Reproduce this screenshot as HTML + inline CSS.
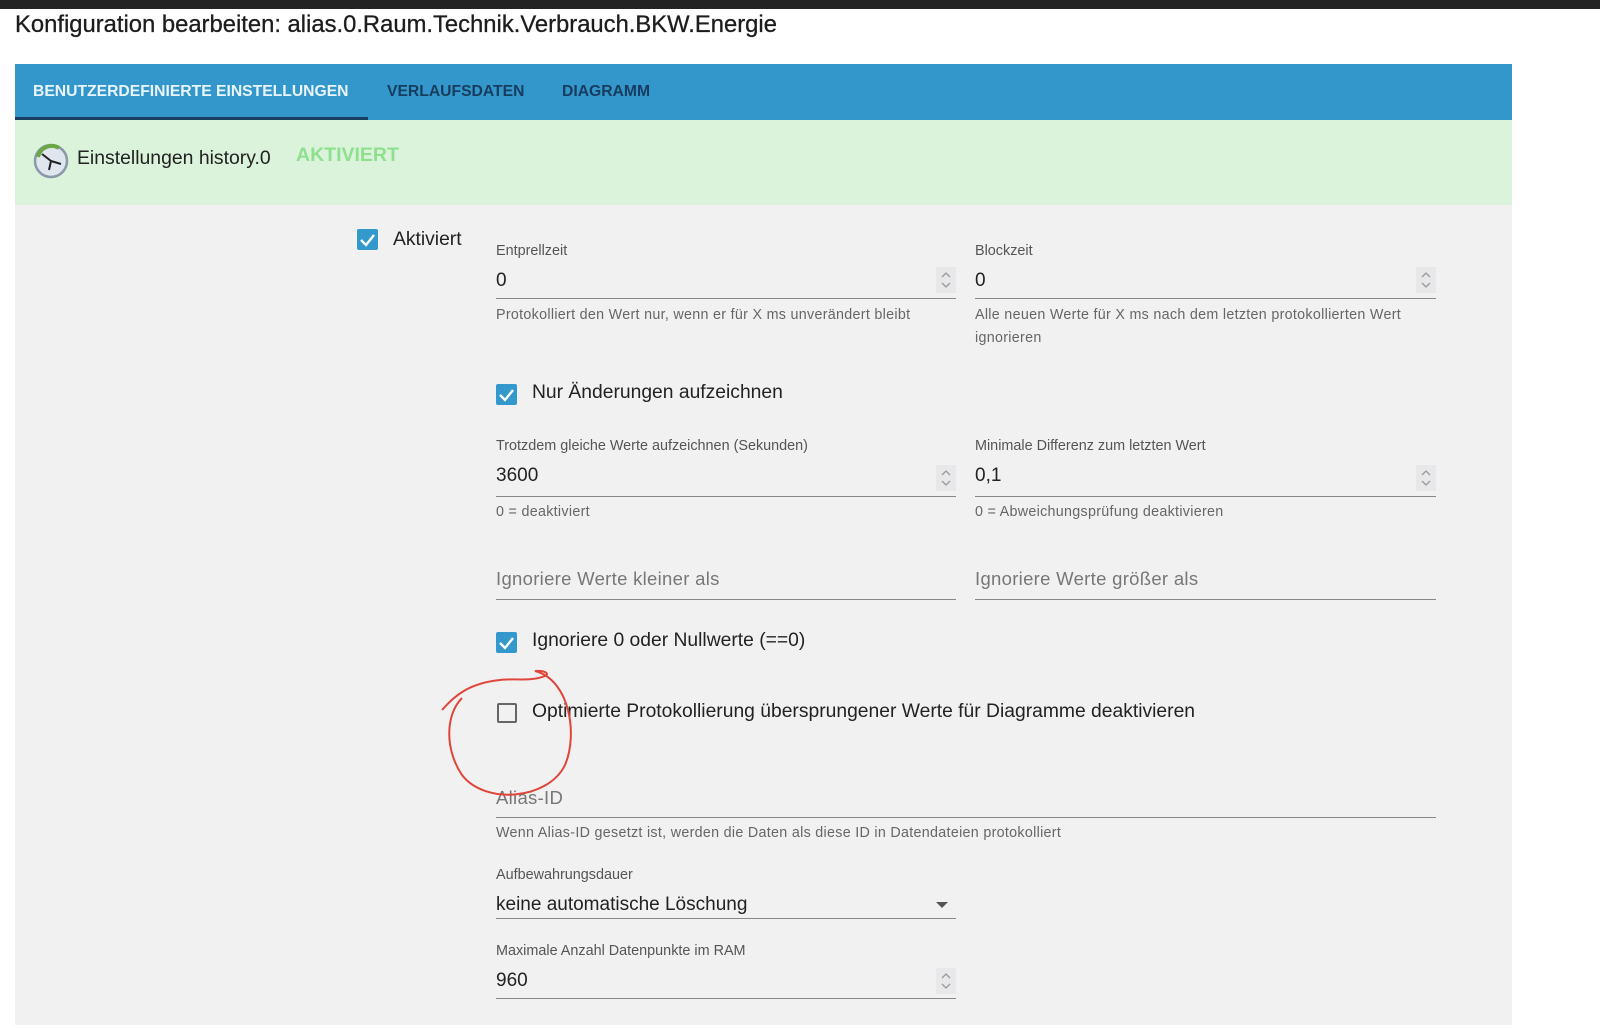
<!DOCTYPE html>
<html><head><meta charset="utf-8"><style>
*{box-sizing:border-box;margin:0;padding:0}
body{width:1600px;height:1028px;background:#fff;font-family:"Liberation Sans",sans-serif;color:#222;position:relative;overflow:hidden}
.a{position:absolute;white-space:nowrap}
.lbl{font-size:14.4px;color:#555}
.val{font-size:19px;color:#222}
.help{font-size:14.3px;color:#666;letter-spacing:.3px}
.ph{font-size:18.5px;color:#777;letter-spacing:.3px}
.line{position:absolute;height:1px;background:#888}
.cb{position:absolute;width:21px;height:21px;border-radius:2px;background:#3399cc}
.cb svg{position:absolute;left:2px;top:2px}
.cbe{position:absolute;width:20px;height:20px;border:2px solid #666;border-radius:2px}
.cbl{font-size:19.3px;color:#222}
.spin{position:absolute;width:20px;height:26px;background:#e8e8ea}
.spin svg{position:absolute;left:4px;top:4px}
</style></head><body>
<div class="a" style="left:0;top:0;width:1600px;height:9px;background:#232323"></div>
<div class="a" style="left:15px;top:11px;font-size:23.8px;color:#1d1d1d;-webkit-text-stroke:0.3px #1d1d1d">Konfiguration bearbeiten: alias.0.Raum.Technik.Verbrauch.BKW.Energie</div>
<div class="a" style="left:15px;top:64px;width:1497px;height:56px;background:#3497cc"></div>
<div class="a" style="left:15px;top:117px;width:353px;height:3px;background:#163f63"></div>
<div class="a" style="left:33px;top:83px;font-size:15.7px;font-weight:bold;color:#e9f4fb">BENUTZERDEFINIERTE EINSTELLUNGEN</div>
<div class="a" style="left:387px;top:83px;font-size:15.7px;font-weight:bold;color:#173d5e">VERLAUFSDATEN</div>
<div class="a" style="left:562px;top:83px;font-size:15.7px;font-weight:bold;color:#173d5e">DIAGRAMM</div>
<div class="a" style="left:15px;top:120px;width:1497px;height:85px;background:#daf3da"></div>
<div class="a" style="left:15px;top:205px;width:1497px;height:820px;background:#f1f1f1"></div>
<svg class="a" style="left:33px;top:143px" width="36" height="36" viewBox="0 0 36 36"><circle cx="18" cy="18" r="16" fill="#dfe6ee" stroke="#8a98aa" stroke-width="2.5"/><path d="M5 14 A14 14 0 0 1 26 5" stroke="#6aa844" stroke-width="4" fill="none"/><path d="M18 18 L9 11 M18 18 L28 21 M18 18 L16 27" stroke="#222" stroke-width="2"/></svg>
<div class="a" style="left:77px;top:147px;font-size:19.4px;color:#222">Einstellungen history.0</div>
<div class="a" style="left:296px;top:144px;font-size:19.5px;font-weight:bold;color:#8ee08e">AKTIVIERT</div>

<div class="cb" style="left:357px;top:229px"><svg width="17" height="17" viewBox="0 0 17 17"><path d="M2 9 L7 14 L15 4" stroke="#fff" stroke-width="2.4" fill="none"/></svg></div>
<div class="a cbl" style="left:393px;top:229px">Aktiviert</div>

<div class="a lbl" style="left:496px;top:243px">Entprellzeit</div>
<div class="a val" style="left:496px;top:270px">0</div>
<div class="spin" style="left:936px;top:267px"><svg width="12" height="18" viewBox="0 0 12 18"><path d="M2 6 L6 2 L10 6 M2 12 L6 16 L10 12" stroke="#999" stroke-width="1.3" fill="none"/></svg></div>
<div class="line" style="left:496px;top:298px;width:460px"></div>
<div class="a help" style="left:496px;top:307px">Protokolliert den Wert nur, wenn er für X ms unverändert bleibt</div>

<div class="a lbl" style="left:975px;top:243px">Blockzeit</div>
<div class="a val" style="left:975px;top:270px">0</div>
<div class="spin" style="left:1416px;top:267px"><svg width="12" height="18" viewBox="0 0 12 18"><path d="M2 6 L6 2 L10 6 M2 12 L6 16 L10 12" stroke="#999" stroke-width="1.3" fill="none"/></svg></div>
<div class="line" style="left:975px;top:298px;width:461px"></div>
<div class="a help" style="left:975px;top:307px">Alle neuen Werte für X ms nach dem letzten protokollierten Wert</div>
<div class="a help" style="left:975px;top:330px">ignorieren</div>

<div class="cb" style="left:496px;top:384px"><svg width="17" height="17" viewBox="0 0 17 17"><path d="M2 9 L7 14 L15 4" stroke="#fff" stroke-width="2.4" fill="none"/></svg></div>
<div class="a cbl" style="left:532px;top:382px">Nur Änderungen aufzeichnen</div>

<div class="a lbl" style="left:496px;top:438px">Trotzdem gleiche Werte aufzeichnen (Sekunden)</div>
<div class="a val" style="left:496px;top:465px">3600</div>
<div class="spin" style="left:936px;top:465px"><svg width="12" height="18" viewBox="0 0 12 18"><path d="M2 6 L6 2 L10 6 M2 12 L6 16 L10 12" stroke="#999" stroke-width="1.3" fill="none"/></svg></div>
<div class="line" style="left:496px;top:496px;width:460px"></div>
<div class="a help" style="left:496px;top:504px">0 = deaktiviert</div>

<div class="a lbl" style="left:975px;top:438px">Minimale Differenz zum letzten Wert</div>
<div class="a val" style="left:975px;top:465px">0,1</div>
<div class="spin" style="left:1416px;top:465px"><svg width="12" height="18" viewBox="0 0 12 18"><path d="M2 6 L6 2 L10 6 M2 12 L6 16 L10 12" stroke="#999" stroke-width="1.3" fill="none"/></svg></div>
<div class="line" style="left:975px;top:496px;width:461px"></div>
<div class="a help" style="left:975px;top:504px">0 = Abweichungsprüfung deaktivieren</div>

<div class="a ph" style="left:496px;top:568px">Ignoriere Werte kleiner als</div>
<div class="line" style="left:496px;top:599px;width:460px"></div>
<div class="a ph" style="left:975px;top:568px">Ignoriere Werte größer als</div>
<div class="line" style="left:975px;top:599px;width:461px"></div>

<div class="cb" style="left:496px;top:632px"><svg width="17" height="17" viewBox="0 0 17 17"><path d="M2 9 L7 14 L15 4" stroke="#fff" stroke-width="2.4" fill="none"/></svg></div>
<div class="a cbl" style="left:532px;top:630px">Ignoriere 0 oder Nullwerte (==0)</div>

<div class="cbe" style="left:497px;top:703px"></div>
<div class="a cbl" style="left:532px;top:701px">Optimierte Protokollierung übersprungener Werte für Diagramme deaktivieren</div>

<div class="a ph" style="left:496px;top:787px">Alias-ID</div>
<div class="line" style="left:496px;top:817px;width:940px"></div>
<div class="a help" style="left:496px;top:825px">Wenn Alias-ID gesetzt ist, werden die Daten als diese ID in Datendateien protokolliert</div>

<div class="a lbl" style="left:496px;top:867px">Aufbewahrungsdauer</div>
<div class="a val" style="left:496px;top:894px">keine automatische Löschung</div>
<div class="a" style="left:936px;top:902px;width:0;height:0;border-left:6px solid transparent;border-right:6px solid transparent;border-top:6px solid #555"></div>
<div class="line" style="left:496px;top:918px;width:460px"></div>

<div class="a lbl" style="left:496px;top:943px">Maximale Anzahl Datenpunkte im RAM</div>
<div class="a val" style="left:496px;top:970px">960</div>
<div class="spin" style="left:936px;top:968px"><svg width="12" height="18" viewBox="0 0 12 18"><path d="M2 6 L6 2 L10 6 M2 12 L6 16 L10 12" stroke="#999" stroke-width="1.3" fill="none"/></svg></div>
<div class="line" style="left:496px;top:998px;width:460px"></div>

<svg class="a" style="left:0;top:0" width="1600" height="1028"><path d="M442 710 C455 695 470 683 500 680 C515 678 530 682 545 676 C550 674 545 670 535 671 C570 680 578 735 565 765 C548 800 485 805 462 775 C445 750 445 715 462 698" stroke="#e0453a" stroke-width="2" fill="none"/></svg>
</body></html>
